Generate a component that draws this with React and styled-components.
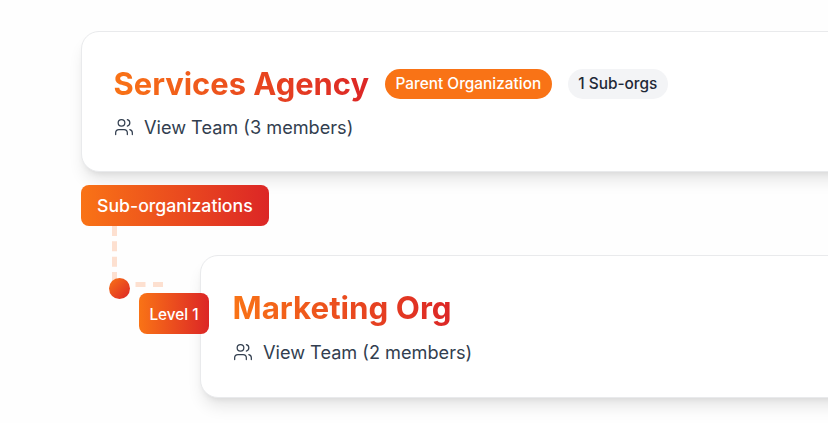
import React from "react";
import styled, { createGlobalStyle } from "styled-components";
import { Users } from "lucide-react";

const Global = createGlobalStyle`
  html, body { margin: 0; padding: 0; height: 100%; background: #fff; overflow: hidden; }
  body { font-family: Inter, "Liberation Sans", sans-serif; }
`;

const GRADIENT = "linear-gradient(to right, #f97316, #dc2626)";

const Page = styled.div`
  width: 828px;
  height: 423px;
  overflow: hidden;
  padding: 31px 0 0 81px;
  box-sizing: border-box;
  background: #fefefe;
`;

const Card = styled.section`
  box-sizing: border-box;
  width: 900px;
  background: #fff;
  border: 1px solid #e9eaec;
  border-radius: 18px;
  padding: 33px 31.5px 0;
  box-shadow: 0 11px 16px -3px rgba(0, 0, 0, 0.1), 0 4px 7px -4px rgba(0, 0, 0, 0.1);
  height: ${(p) => p.$height}px;
`;

const TitleRow = styled.div`
  display: flex;
  align-items: center;
  gap: 16px;
`;

const Title = styled.h2`
  margin: 0;
  width: max-content;
  font-size: ${(p) => p.$size}px;
  line-height: 38px;
  font-weight: 700;
  color: transparent;
  background: ${GRADIENT};
  -webkit-background-clip: text;
  background-clip: text;
`;

const Pill = styled.span`
  font-size: 15.4px;
  line-height: 20px;
  font-weight: 500;
  padding: 5px 10.5px;
  border-radius: 999px;
  background: ${(p) => (p.$parent ? "#f97316" : "#f3f4f6")};
  color: ${(p) => (p.$parent ? "#fff" : "#1f2937")};
`;

const TeamLink = styled.div`
  display: flex;
  align-items: center;
  gap: 10.5px;
  margin-top: ${(p) => p.$gap}px;
  font-size: 18.15px;
  line-height: 26px;
  color: #323e4f;
`;

const SubLabel = styled.div`
  width: max-content;
  margin: 13px 0 0 0;
  padding: 10px 16px;
  border-radius: 8px;
  background: ${GRADIENT};
  color: #fff;
  font-size: 17.7px;
  line-height: 21px;
  font-weight: 500;
`;

const Tree = styled.div`
  position: relative;
  margin: 29px 0 0 119px;
`;

const VLine = styled.div`
  position: absolute;
  left: -88px;
  top: -29px;
  height: 56px;
  width: 0;
  border-left: 5px dashed #fde0d0;
`;

const HLine = styled.div`
  position: absolute;
  left: -82px;
  top: 27px;
  width: 45px;
  height: 0;
  border-top: 5px dashed #fde0d0;
`;

const Dot = styled.div`
  position: absolute;
  left: -91px;
  top: 23px;
  width: 21px;
  height: 21px;
  border-radius: 50%;
  background: linear-gradient(135deg, #f97316, #dc2626);
`;

const LevelBadge = styled.div`
  position: absolute;
  left: -61px;
  top: 38px;
  width: 70px;
  height: 41px;
  box-sizing: border-box;
  padding-top: 2px;
  display: flex;
  align-items: center;
  justify-content: center;
  border-radius: 8px;
  background: ${GRADIENT};
  color: #fff;
  font-size: 15.3px;
  font-weight: 500;
  z-index: 2;
`;

export default function App() {
  return (
    <Page>
      <Global />
      <Card $height={141}>
        <TitleRow>
          <Title $size={30.9}>Services Agency</Title>
          <Pill $parent>Parent Organization</Pill>
          <Pill>1 Sub-orgs</Pill>
        </TitleRow>
        <TeamLink $gap={11}>
          <Users size={20} strokeWidth={1.5} />
          View Team (3 members)
        </TeamLink>
      </Card>
      <SubLabel>Sub-organizations</SubLabel>
      <Tree>
        <VLine />
        <HLine />
        <Dot />
        <LevelBadge>Level 1</LevelBadge>
        <Card $height={143}>
          <Title $size={31.3}>Marketing Org</Title>
          <TeamLink $gap={12}>
            <Users size={20} strokeWidth={1.5} />
            View Team (2 members)
          </TeamLink>
        </Card>
      </Tree>
    </Page>
  );
}
